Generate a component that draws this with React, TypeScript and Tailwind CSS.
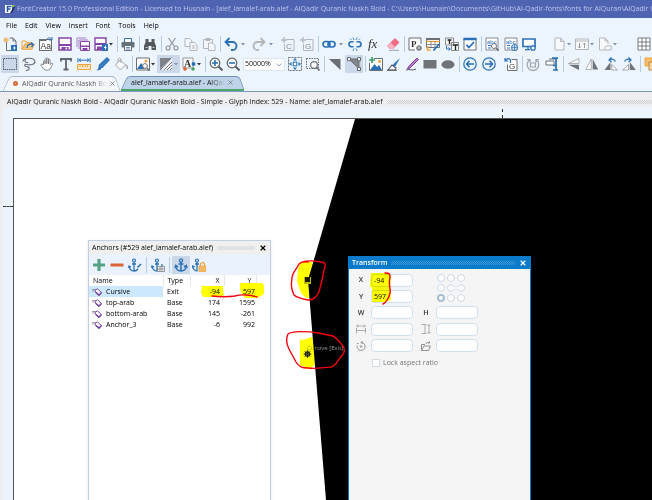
import React from 'react';
import clsx from 'clsx';
import { X } from 'lucide-react';

const GRAY = '#6b6e72';
const BLUE = '#2a70b8';
const LIGHT = '#b3b6ba';
const PURPLE = '#8545a8';
const ORANGE = '#eda23c';

const icons: Record<string, React.ReactNode> = {
  new: (
    <>
      <path d="M3.500 5V13.500H9M6.500 1h3.500l3 3V8M10 1v3h3" fill="none" stroke={GRAY} />
      <path d="M3 0v6M0 3h6M1 1l4 4M5 1L1 5" stroke={ORANGE} strokeWidth=".8" />
      <rect x="8" y="8" width="6" height="6" fill={BLUE} />
      <path d="M11.500 9.500v3M10 11h2.500" stroke="#fff" />
    </>
  ),
  open: (
    <>
      <path d="M1 12V4h4l1 1.500h4V7H4z" fill="none" stroke={ORANGE} />
      <path d="M1 12.500L4 7h9.500L11 12.500z" fill="#f5c77e" stroke={ORANGE} strokeWidth=".7" />
      <path d="M6 11c0-3.500 3-4.500 6-3.500M10 5.500l2.500 2-2 2.500" fill="none" stroke={BLUE} strokeWidth="1.300" />
    </>
  ),
  fontInfo: (
    <>
      <rect x=".5" y="2.500" width="12" height="11" fill="#fff" stroke={GRAY} />
      <path d="M.5 3h7" stroke={GRAY} strokeWidth="2" />
      <text x="1.500" y="11.500" fontSize="8.500" fill="#333" fontFamily="Liberation Sans, sans-serif">Aa</text>
      <path d="M8 2c2-2 3.500-1 4.500 0M13 0v3h-3" fill="none" stroke={BLUE} />
    </>
  ),
  save: (
    <>
      <path d="M1 1h12v12H1z" fill="#fff" stroke={PURPLE} strokeWidth="1.500" />
      <path d="M1 7h12v2H1zM3.500 10h7V13h-7z" fill={PURPLE} />
      <path d="M7.500 10.500h1.500v2H7.500z" fill="#fff" />
    </>
  ),
  saveAll: (
    <>
      <path d="M1 10V1h9M3 12V3h9" fill="none" stroke="#a77cc2" />
      <path d="M4.500 4.500h9v9h-9z" fill="#fff" stroke={PURPLE} />
      <path d="M4.500 8.500h9v1.500h-9zM6.500 11h5V13.500h-5z" fill={PURPLE} />
    </>
  ),
  saveAs: (
    <>
      <path d="M1 1h11v12H1z" fill="#fff" stroke={PURPLE} strokeWidth="1.400" />
      <path d="M1 6h11v2H1zM3 9.500h5V13H3z" fill={PURPLE} />
      <rect x="8" y="7" width="6" height="7" fill={BLUE} />
      <path d="M11.500 8.500v4M10 10.500h2.500" stroke="#fff" />
    </>
  ),
  print: (
    <>
      <path d="M3.500 5V1.500h7V5" fill="#fff" stroke={BLUE} />
      <rect x=".5" y="5" width="13" height="5.500" rx="1" fill="#66717e" />
      <path d="M3.500 8.500h7v5h-7z" fill="#fff" stroke={GRAY} />
      <path d="M5 10.500h4M5 12h4" stroke={BLUE} strokeWidth=".8" />
    </>
  ),
  binoculars: (
    <>
      <path d="M2.500 2h3v3h3V2h3v3l1.500 4v4h-4.500v-4h-3v4H1V9l1.500-4z" fill="#53565a" />
      <path d="M2.500 10.500h2M9.500 10.500h2" stroke="#c9ccd0" />
    </>
  ),
  cut: (
    <g fill="none" stroke="#8e9297" strokeWidth="1.100">
      <path d="M3.500 1l6 8.500M10.500 1l-6 8.500" />
      <circle cx="3" cy="11" r="2" />
      <circle cx="11" cy="11" r="2" />
    </g>
  ),
  copy: (
    <g fill="#f3f6fa" stroke={LIGHT}>
      <path d="M1 1.500h4.500L8 4v5.500H1z" />
      <path d="M6 5.500h4.500L13 8v5.500H6zM8 9h3M8 11h3" />
    </g>
  ),
  paste: (
    <g fill="#f3f6fa" stroke={LIGHT}>
      <path d="M1.500 2.500h9v9h-9zM4 1.500h4v2H4z" />
      <path d="M6.500 6h4L13 8.500v5H6.500z" />
    </g>
  ),
  undo: <path d="M5.500 1L1.500 5l4 4M2 5h6.500a4 4 0 010 8H7" fill="none" stroke={BLUE} strokeWidth="1.800" />,
  redo: <path d="M8.500 1l4 4-4 4M12 5H5.500a4 4 0 000 8H7" fill="none" stroke={LIGHT} strokeWidth="1.800" />,
  copyC: (
    <>
      <path d="M6 2.500h7v11H3.500V7" fill="none" stroke={LIGHT} />
      <path d="M3 0v6M0 3h6" stroke={LIGHT} strokeWidth="1.300" />
      <text x="5" y="11.500" fontSize="8" fill="#888" fontFamily="Liberation Sans, sans-serif">C</text>
    </>
  ),
  copyG: (
    <>
      <path d="M6 2.500h7v11H3.500V7" fill="none" stroke={LIGHT} />
      <path d="M3 0v6M0 3h6" stroke={LIGHT} strokeWidth="1.300" />
      <text x="5" y="11.500" fontSize="8" fill="#888" fontFamily="Liberation Sans, sans-serif">G</text>
    </>
  ),
  link: (
    <g fill="none" stroke={BLUE} strokeWidth="1.700">
      <rect x="1" y="4.500" width="7" height="5.500" rx="2.700" />
      <rect x="6" y="4.500" width="7" height="5.500" rx="2.700" />
    </g>
  ),
  unlink: (
    <g fill="none" stroke={BLUE} strokeWidth="1.600">
      <path d="M5.500 4.700H3.500a2.500 2.500 0 000 5h2M8.500 4.700h2a2.500 2.500 0 010 5h-2" />
      <path d="M5 .5l1 2.500M9 .5L8 3M5 14l1-2.500M9 14l-1-2.500M2 1.500l1.500 1.500M12 1.500L10.500 3" strokeWidth=".8" />
    </g>
  ),
  fx: <text x="1" y="11" fontSize="13" fontStyle="italic" fill="#333" fontFamily="Liberation Serif, serif">fx</text>,
  eraser: (
    <>
      <path d="M9 1l4.500 4.500L7 12H4L1 9z" fill="#ee6f86" />
      <path d="M4.500 5.500L9 10l-2 2H4L1 9z" fill="#f6b3bf" />
      <path d="M3 13.300h10" stroke="#9aa0a8" />
    </>
  ),
  preview: (
    <>
      <path d="M13 7V1H1v12h6" fill="#fff" stroke={GRAY} />
      <text x="3" y="10" fontSize="9" fill="#333" fontFamily="Liberation Serif, serif" fontWeight="bold">P</text>
      <circle cx="11" cy="11" r="2" fill="#fff" stroke={GRAY} strokeWidth="1.200" />
      <path d="M11 7.800v6.200M7.800 11H14" stroke={GRAY} strokeWidth=".6" />
    </>
  ),
  tableEdit: (
    <>
      <path d="M.5 1.500h13v9H.5z" fill="#fff" stroke={GRAY} />
      <path d="M.5 2h13" stroke={GRAY} strokeWidth="2" />
      <path d="M.5 4.500h13" stroke={ORANGE} strokeWidth="1.300" />
      <path d="M0 7.500h14M5 4v7M9 4v7" stroke={GRAY} strokeWidth=".7" />
      <path d="M1.500 9v4h3" fill="none" stroke={ORANGE} strokeWidth="1.500" />
      <path d="M7.500 13.500L13 7" stroke={BLUE} strokeWidth="1.800" />
    </>
  ),
  transformT: (
    <>
      <path d="M.5 1h8v7h-8zM6.500 5.500h7v8h-7z" fill="#fff" stroke={GRAY} strokeWidth=".8" />
      <path d="M2.500 3h4M4.500 3v4M8 8h5M10.500 8v5" stroke="#222" strokeWidth="1.400" />
      <path d="M1.500 9v3H5M3.500 10.500L5.300 12l-1.800 1.500" fill="none" stroke={BLUE} />
    </>
  ),
  validate: (
    <>
      <path d="M1 1.500h12v11.500H1z" fill="#fff" stroke={GRAY} />
      <path d="M.5 2h13" stroke={BLUE} strokeWidth="2.500" />
      <path d="M3.500 8l2.500 2.500 5-5.500" fill="none" stroke={BLUE} strokeWidth="1.800" />
    </>
  ),
  abcSearch: (
    <>
      <path d="M1 1h12v12H1z" fill="#fff" stroke={GRAY} strokeWidth=".8" />
      <text x="2" y="6.500" fontSize="6" fill={BLUE} fontFamily="Liberation Sans, sans-serif">abc</text>
      <path d="M3 8.500h3M3 11h3" stroke={BLUE} />
      <circle cx="9" cy="9" r="2.500" fill="#fff" stroke={GRAY} />
      <path d="M11 11l3 3" stroke={GRAY} strokeWidth="1.500" />
    </>
  ),
  abcWeb: (
    <>
      <path d="M1 1h12v12H1z" fill="#fff" stroke={GRAY} strokeWidth=".8" />
      <text x="2" y="6.500" fontSize="6" fill={BLUE} fontFamily="Liberation Sans, sans-serif">abc</text>
      <path d="M3 8.500h3M3 11h3" stroke={BLUE} />
      <circle cx="10.500" cy="10.500" r="3" fill="#dcebfa" stroke={BLUE} />
      <path d="M7.500 10.500h6M10.500 7.500v6" stroke={BLUE} strokeWidth=".7" />
    </>
  ),
  monitor: (
    <>
      <path d="M1 2h12v7.500H1z" fill="#fff" stroke={BLUE} strokeWidth="1.700" />
      <path d="M6 10v2.500M3 12.700h5" stroke={BLUE} strokeWidth="1.200" />
      <circle cx="11" cy="11" r="2.200" fill="#fff" stroke={BLUE} strokeWidth="1.300" />
    </>
  ),
  page: <path d="M3 1h5.500L12 4.500V13H3zM8.500 1v3.500H12" fill="#f7f9fb" stroke={LIGHT} />,
  sort: (
    <>
      <path d="M.5 2h13v10.500H.5zM.5 4h13" fill="#f7f9fb" stroke={LIGHT} />
      <path d="M4.500 6v5M3 9.500L4.500 11 6 9.500M9.500 11V6M8 7.500L9.500 6 11 7.500" fill="none" stroke="#8e9297" strokeWidth=".9" />
    </>
  ),
  pageTag: (
    <>
      <path d="M8 13H1.500V1H7l3 3v3M7 1v3h3" fill="#f7f9fb" stroke={LIGHT} />
      <path d="M8 9h5l.5 2-.5 2H8l-1.500-2z" fill="#f7f9fb" stroke={LIGHT} />
    </>
  ),
  grid: <path d="M1 1h12v12H1zM1 5h12M1 9h12M5 1v12M9 1v12" fill="#fff" stroke="#777a7e" />,
  marquee: <rect x=".5" y="1.500" width="13" height="11" fill="none" stroke="#555b63" strokeDasharray="1.500 .8" />,
  lasso: (
    <path d="M1 4.500c0-4 12-4.500 12 0 0 3-5 4-8 3-2.500-1-3 1.500-1 2 2 .7 4 .5 3 2.500-.5 1-2 1.500-3 1.500M4 2.500C2 3 3 6 6 5.500" fill="none" stroke={GRAY} strokeWidth="1.100" />
  ),
  hand: (
    <path d="M3.500 8V4.500c0-1.200 1.500-1.200 1.500 0V7 2.500c0-1.300 1.700-1.300 1.700 0V6.500 1.800c0-1.200 1.700-1.200 1.700 0V7 3c0-1.200 1.600-1.200 1.600 0v4.500l1.500-1.200c.8-.4 1.500.3 1 1L10 12c-1 1.500-5 1.700-6.300 0L1 8.300c-.4-1 .7-1.500 1.300-1z" fill="#fff" stroke={GRAY} strokeWidth=".8" />
  ),
  type: <path d="M2 4.500V2h10v2.500M7 2v10.500M4.500 12.500h5" fill="none" stroke="#62656a" strokeWidth="1.800" />,
  ruler: (
    <>
      <path d="M.5 7.500h13v5H.5z" fill="#fde8c6" stroke={ORANGE} />
      <path d="M3 8v2M5.500 8v2M8 8v2M10.500 8v2" stroke={ORANGE} />
      <path d="M1 1v4.500M13 1v4.500M2 3.200h10M4 1.700L2 3.200l2 1.500M10 1.700l2 1.500-2 1.500" fill="none" stroke={BLUE} />
    </>
  ),
  pen: (
    <>
      <path d="M11 1l2 2-7 7.500-3 .5.500-3z" fill="#3f83c6" stroke={BLUE} strokeWidth="1.300" />
      <path d="M4 10c-1 0-1.500 2.500-3.500 3 2.500.6 5 0 4.500-2" fill={BLUE} />
    </>
  ),
  bucket: (
    <>
      <path d="M6 3l5.500 5-5 5L1.500 8zM4 5V2.500C4 .8 7 .8 7 2.500V6" fill="#fafbfc" stroke="#a2a5a9" />
      <path d="M11.500 8c2 0 1.800 3 1.800 4" fill="none" stroke="#a2a5a9" strokeWidth="1.400" />
    </>
  ),
  imageZoom: (
    <>
      <path d="M.5 1h13v12H.5z" fill="#fff" stroke={GRAY} />
      <path d="M1 12l4-6 4 6z" fill={BLUE} />
      <circle cx="10" cy="4" r="1.500" fill={ORANGE} />
      <circle cx="9" cy="9" r="2.400" fill="#fff" stroke={GRAY} />
      <path d="M11 11l2.500 3" stroke={GRAY} strokeWidth="1.500" />
    </>
  ),
  halfFill: (
    <>
      <path d="M1 1h11L1 12z" fill="#7e838a" />
      <path d="M13 1v12H3z" fill="#f2f4f7" />
      <path d="M12.500 .5L1 13M5 13l8-8M8 13l5-5M11 13l2-2" stroke="#62656a" strokeWidth=".9" />
    </>
  ),
  nodeA: (
    <>
      <path d="M1 1h10v10H1z" fill="#fff" stroke={GRAY} strokeWidth=".7" />
      <text x="2" y="10" fontSize="10" fontWeight="bold" fill="#333" fontFamily="Liberation Serif, serif">A</text>
      <circle cx="11.500" cy="7" r="2" fill={BLUE} />
      <circle cx="3" cy="12" r="1.800" fill="#e2622e" />
      <circle cx="11" cy="12" r="1.800" fill="#4aa564" />
    </>
  ),
  zoomIn: (
    <>
      <circle cx="6" cy="6" r="4.800" fill="#fff" stroke="#5c6066" strokeWidth="1.200" />
      <path d="M9.500 9.500l4 4" stroke="#5c6066" strokeWidth="2" />
      <path d="M3 6h6M6 3v6" stroke={BLUE} strokeWidth="1.600" />
    </>
  ),
  zoomOut: (
    <>
      <circle cx="6" cy="6" r="4.800" fill="#fff" stroke="#5c6066" strokeWidth="1.200" />
      <path d="M9.500 9.500l4 4" stroke="#5c6066" strokeWidth="2" />
      <path d="M3 6h6" stroke={BLUE} strokeWidth="1.600" />
    </>
  ),
  fit: (
    <>
      <rect x=".5" y=".5" width="13" height="13" fill="none" stroke={GRAY} strokeDasharray="2 1" />
      <rect x="5.200" y="5.200" width="3.600" height="3.600" fill="#fff" stroke={BLUE} />
      <path d="M7 1l2 2.500H5zM7 13l2-2.500H5zM1 7l2.500-2v4zM13 7l-2.500-2v4z" fill={BLUE} />
    </>
  ),
  zoomArea: (
    <>
      <rect x=".5" y="1.500" width="12" height="10" fill="none" stroke={GRAY} strokeDasharray="1.500 1" />
      <circle cx="8" cy="8" r="3.300" fill="#fff" stroke={GRAY} strokeWidth="1.200" />
      <path d="M10.500 10.500l3 3" stroke={GRAY} strokeWidth="1.700" />
    </>
  ),
  corner: <path d="M1 2h11.500v11z" fill="#6b6e72" />,
  cornerNodes: (
    <>
      <path d="M2 2h10v10z" fill="#83878d" stroke={GRAY} />
      <path d="M.5 .7h3v3h-3zM10.500 .7h3v3h-3zM10.500 10.500h3v3h-3z" fill="#fff" stroke="#62656a" />
    </>
  ),
  imageAdd: (
    <>
      <path d="M5 1.500h8.500v12H.5V6" fill="#fff" stroke={GRAY} />
      <path d="M1 13l4.500-6L8 10l2-2 3 5z" fill={BLUE} />
      <circle cx="10.500" cy="4.500" r="1.500" fill={ORANGE} />
      <path d="M3 0v6M0 3h6" stroke="#3c9e68" strokeWidth="1.700" />
    </>
  ),
  brush: (
    <>
      <path d="M13 1L6.500 7l-1 3 3-1z" fill={BLUE} />
      <path d="M1 13l4-5 4 3-1 2z" fill="#fff" stroke="#55595e" strokeWidth="1.200" />
      <path d="M0 13.200h10" stroke="#55595e" />
    </>
  ),
  pencil: (
    <>
      <path d="M12 1l1.500 1.500L5 11l-2.500 1L3.500 9.500z" fill="#b07acb" stroke={PURPLE} />
      <path d="M1 13.200c3-2 5 1 10-1" fill="none" stroke="#55595e" />
    </>
  ),
  rect: <path d="M.5 3h13v8.500H.5z" fill="#707377" />,
  ellipse: <ellipse cx="7" cy="7.500" rx="6.500" ry="4.300" fill="#707377" />,
  prev: (
    <g fill="none" stroke={BLUE} strokeWidth="1.200">
      <circle cx="7" cy="7" r="6.200" />
      <path d="M11 7H3.500M6.500 3.800L3.500 7l3 3.200" strokeWidth="1.500" />
    </g>
  ),
  next: (
    <g fill="none" stroke={BLUE} strokeWidth="1.200">
      <circle cx="7" cy="7" r="6.200" />
      <path d="M3 7h7.500M7.500 3.800l3 3.200-3 3.200" strokeWidth="1.500" />
    </g>
  ),
  glyphG: (
    <>
      <path d="M7.500 2.500H13v11H3.500V7.500" fill="#fff" stroke={GRAY} />
      <text x="5" y="11.500" fontSize="8" fill="#444" fontFamily="Liberation Sans, sans-serif">G</text>
      <path d="M1 1v3h3M1.500 4c1-3 4-3 5-1M6.500 6V3" fill="none" stroke={BLUE} strokeWidth="1.200" />
    </>
  ),
  rotateRect: (
    <g fill="none" stroke="#a0a3a7" strokeWidth="1.200">
      <path d="M4.500 6h5v4h-5z" />
      <path d="M3.500 3a5.800 5.800 0 107 0M4 5.500V2.500H1M10 5.500V2.500h3" />
    </g>
  ),
  align: (
    <>
      <path d="M1 4h8v4H1zM4 2h6" fill="#fff" stroke={GRAY} />
      <path d="M7 1.200h6M11 1v12.500M8 8.500h3M8 13h5" fill="none" stroke={BLUE} strokeWidth="1.700" />
    </>
  ),
  flipV: (
    <>
      <path d="M12 1.500V6.500H1.500z" fill="#fff" stroke="#8e9297" strokeWidth=".7" />
      <path d="M12 13V7.800H1.500z" fill="#707377" />
    </>
  ),
  flipH: (
    <>
      <path d="M6.300 2v10.500H.8z" fill="#fff" stroke="#8e9297" strokeWidth=".7" />
      <path d="M7.700 2v10.500h5.500z" fill="#707377" />
    </>
  ),
  rotL: (
    <>
      <path d="M6.500 5v8H.5z" fill="#707377" />
      <path d="M7.800 7.500V13h5.500z" fill="#fff" stroke="#8e9297" strokeWidth=".8" />
      <path d="M5 3c3-1.500 5-1 6.500 1.500M7.500 .5L5 3l2.500 2" fill="none" stroke={BLUE} strokeWidth="1.200" />
    </>
  ),
  rotR: (
    <>
      <path d="M6.500 7.500V13H.7z" fill="#fff" stroke="#8e9297" strokeWidth=".8" />
      <path d="M7.800 5v8h6z" fill="#707377" />
      <path d="M9 3C6 1.500 4 2 2.500 4.500M6.500 .5L9 3 6.500 5" fill="none" stroke={BLUE} strokeWidth="1.200" />
    </>
  ),
  union: (
    <>
      <path d="M1 1h8v8H1z" fill="#f3bd6d" stroke={ORANGE} />
      <path d="M5 5h8v8H5z" fill="#f7d6a3" stroke="#b98440" />
    </>
  ),
};

const anchorPath = 'M7 4v9M4.500 6h5M1.500 8c.5 3 2.500 5 5.500 5s5-2 5.500-5M1 10l.7-2.500L4 9M13 10l-.7-2.500L10 9';

const anchorIcons: Record<string, React.ReactNode> = {
  'Add anchor': <path d="M7 1v12M1 7h12" stroke="#55a184" strokeWidth="3.200" />,
  'Remove anchor': <path d="M.5 7h13" stroke="#dd6436" strokeWidth="3" />,
  'Edit anchor': (
    <>
      <path d="M6 4v9M4 6h4M1 8c.5 3 2 5 5 5 2 0 3-.7 4-2M.7 10L1 8l2 1" fill="none" stroke={BLUE} strokeWidth="1.300" />
      <circle cx="6" cy="2.500" r="1.500" fill="none" stroke={BLUE} strokeWidth="1.200" />
      <path d="M9.500 9.500L13 6" stroke={BLUE} strokeWidth="1.600" />
    </>
  ),
  'Anchor table': (
    <>
      <path d="M6 4v9M4 6h4M1 8c.5 3 2 5 5 5M.7 10L1 8l2 1M11 9V6" fill="none" stroke={BLUE} strokeWidth="1.300" />
      <circle cx="6" cy="2.500" r="1.500" fill="none" stroke={BLUE} strokeWidth="1.200" />
      <path d="M6.500 8.500h7v5h-7zM6.500 11h7M9 9v4M11 9v4" fill="#fff" stroke={GRAY} strokeWidth=".7" />
    </>
  ),
  'Show anchors': (
    <>
      <path d={anchorPath} fill="none" stroke={BLUE} strokeWidth="1.500" />
      <circle cx="7" cy="2.500" r="1.600" fill="none" stroke={BLUE} strokeWidth="1.300" />
    </>
  ),
  'Lock anchors': (
    <>
      <path d="M5 4v9M3 6h4M.5 8c.5 3 2 5 5 5M.5 10l.3-2 2 1" fill="none" stroke={BLUE} strokeWidth="1.300" />
      <circle cx="5" cy="2.500" r="1.500" fill="none" stroke={BLUE} strokeWidth="1.200" />
      <path d="M8.500 8V6.500c0-2.500 4-2.500 4 0V8" fill="none" stroke={ORANGE} strokeWidth="1.200" />
      <path d="M7 8h7v5.500H7z" fill="#f3b765" stroke={ORANGE} strokeWidth=".7" />
    </>
  ),
};

function Drawing({ children }: { children: React.ReactNode }) {
  return (
    <svg viewBox="0 0 14 14" className="size-3.5 shrink-0" aria-hidden="true">
      {children}
    </svg>
  );
}

interface ToolProps {
  name: string;
  menu?: boolean;
  wide?: boolean;
  active?: boolean;
  muted?: boolean;
}

function Tool({ name, menu, wide, active, muted }: ToolProps) {
  return (
    <button
      type="button"
      aria-label={name}
      className={clsx('flex h-[18px] shrink-0 items-center', wide ? 'gap-[3px]' : 'gap-px', active && '-mx-0.5 bg-[#cbd8e9] px-0.5')}
    >
      <Drawing>{icons[name]}</Drawing>
      {menu && (
        <svg viewBox="0 0 4 3" className={clsx('h-[3px] w-1', muted ? 'text-[#7f93ad]' : 'text-[#333]')} aria-hidden="true">
          <path d="M0 0h4L2 2.500z" fill="currentColor" />
        </svg>
      )}
    </button>
  );
}

function Group({ className, children }: { className: string; children: React.ReactNode }) {
  return <div className={clsx('flex shrink-0 items-center justify-between', className)}>{children}</div>;
}

const Sep = () => <div className="mr-[3px] ml-1 h-4 w-px shrink-0 bg-[#b4cbe6]" />;

const Hatch = ({ className }: { className: string }) => (
  <div className={clsx('h-1 flex-1 bg-[length:2px_2px]', className)} />
);

function Tab({ active, children, label }: { active?: boolean; children?: React.ReactNode; label: string }) {
  const face = active
    ? 'before:bg-[#bfd3e8] after:bg-[#bfd3e8] before:border-[#6f8fb5] after:border-[#6f8fb5]'
    : 'before:bg-[#f4f8fd] after:bg-[#f4f8fd] before:border-[#a6b8cf] after:border-[#a6b8cf]';
  return (
    <div
      role="tab"
      aria-selected={!!active}
      className={clsx(
        'relative isolate flex h-[15px] shrink-0 items-center gap-0.5 pl-[10px]',
        "before:absolute before:inset-y-0 before:left-[3px] before:-z-10 before:w-1/2 before:-skew-x-[25deg] before:rounded-tl-sm before:border-t before:border-l before:content-['']",
        "after:absolute after:inset-y-0 after:right-[3px] after:-z-10 after:w-1/2 after:skew-x-[20deg] after:rounded-tr-sm after:border-t after:border-r after:content-['']",
        face,
        active ? 'w-[123px] border-b-2 border-[#4ba56c] pr-[10px]' : 'w-[118px] pr-[5px] text-[#555]'
      )}
    >
      {children}
      <span className="min-w-0 flex-1 overflow-hidden mask-r-from-85% whitespace-nowrap">{label}</span>
      <button type="button" aria-label={`Close ${label}`}>
        <X size={7} strokeWidth={2} className="text-[#555]" />
      </button>
    </div>
  );
}

// Marker blot that sits behind a value
const Marker = ({ className, d }: { className: string; d: string }) => (
  <svg className={clsx('pointer-events-none absolute -z-10 overflow-visible', className)} fill="#ffff00" aria-hidden="true">
    <path d={d} />
  </svg>
);

const anchors = [
  { name: 'Cursive', type: 'Exit', x: -94, y: 597, marked: true },
  { name: 'top-arab', type: 'Base', x: 174, y: 1595 },
  { name: 'bottom-arab', type: 'Base', x: 145, y: -261 },
  { name: 'Anchor_3', type: 'Base', x: -6, y: 992 },
];

function AnchorsPanel() {
  return (
    <section className="absolute top-[133px] bottom-0 left-[85px] w-[183px] border-x border-t border-[#c3cde3] bg-white text-black shadow-sm">
      <header className="flex h-[13px] items-center gap-1 bg-[#f0f0f1] px-[3px]">
        <h2>Anchors (#529 alef_lamalef-arab.alef)</h2>
        <Hatch className="bg-[repeating-conic-gradient(#d4d4d8_0_25%,transparent_0_50%)]" />
        <button type="button" aria-label="Close anchors">
          <X size={8} strokeWidth={3.5} />
        </button>
      </header>
      <div className="flex h-[21px] items-center gap-1 bg-[#eaf3fd] px-[3px]">
        {Object.entries(anchorIcons).map(([label, icon]) => (
          <React.Fragment key={label}>
            <button
              type="button"
              aria-label={label}
              className={clsx('flex h-[18px] items-center', label === 'Show anchors' && '-mx-0.5 bg-[#cbd8e9] px-0.5')}
            >
              <Drawing>{icon}</Drawing>
            </button>
            {(label === 'Edit anchor' || label === 'Anchor table') && <span className="h-4 w-px bg-[#b4cbe6]" />}
          </React.Fragment>
        ))}
      </div>
      <table className="w-full table-fixed border-collapse">
        <colgroup>
          <col className="w-[74px]" />
          <col className="w-[27px]" />
          <col className="w-[34px]" />
          <col className="w-[32px]" />
          <col />
        </colgroup>
        <thead>
          <tr className="h-[11px] text-left">
            <th className="border-r border-[#e3e6ea] pl-1 font-normal">Name</th>
            <th className="border-r border-[#e3e6ea] pl-1 font-normal">Type</th>
            <th className="border-r border-[#e3e6ea] pr-1 text-right font-normal">X</th>
            <th className="border-r border-[#e3e6ea] pr-1 text-right font-normal">Y</th>
            <th />
          </tr>
        </thead>
        <tbody>
          {anchors.map((a) => (
            <tr key={a.name} className="h-[11px]">
              <td className={clsx('pl-[3px]', a.marked && 'bg-[#cce8ff]')}>
                <span className="flex items-center gap-1">
                  <svg viewBox="0 0 10 8" className="h-2 w-2.5" aria-hidden="true">
                    <path d="M0 1.500h3M0 3h2" stroke="#888" strokeWidth=".8" />
                    <path d="M3 2l2.500-1 4 3.500L7 7.500 3.500 4.500z" fill="#fff" stroke="#7543a0" />
                    <path d="M4 4.500L7 7l2.500-2.500" fill="none" stroke="#7543a0" strokeWidth="1.400" />
                  </svg>
                  {a.name}
                </span>
              </td>
              <td className="pl-1">{a.type}</td>
              <td className="relative isolate pr-1 text-right">
                {a.marked && <Marker className="top-0 right-0 h-3 w-6" d="M2 0h21v3l1 6-2 2H3l-2-5z" />}
                {a.x}
              </td>
              <td className="relative isolate pr-px text-right">
                {a.marked && <Marker className="-top-1 -right-2 h-4 w-6" d="M0 1h22l2 2v9l-3 2-4 2H5l-3-4-2-4z" />}
                {a.y}
              </td>
              <td />
            </tr>
          ))}
        </tbody>
      </table>
    </section>
  );
}

const fieldClass = 'h-[13px] w-[42px] rounded-sm border border-[#cfe0f1] bg-white px-0.5 text-black';

function Field({ label, children, value = '' }: { label: string; children?: React.ReactNode; value?: string }) {
  return (
    <label className="flex items-center">
      <span className="flex w-[22px] justify-center pl-1 pr-0.5 font-semibold">{children ?? label}</span>
      <input aria-label={label} defaultValue={value} className={fieldClass} />
    </label>
  );
}

function TransformPanel() {
  return (
    <section className="absolute top-[149px] bottom-0 left-[345px] w-[183px] border-x border-[#0a78c6] bg-[#f5f5f5]">
      <header className="flex h-[13px] items-center gap-1 bg-[#0a7acb] px-[3px] text-white">
        <h2 className="font-semibold">Transform</h2>
        <Hatch className="bg-[repeating-conic-gradient(#3c96d8_0_25%,transparent_0_50%)]" />
        <button type="button" aria-label="Close transform">
          <X size={8} strokeWidth={3.5} />
        </button>
      </header>
      <div className="mt-[3px] grid h-[82px] grid-cols-[65px_65px] grid-rows-5 items-center text-[#333]">
        <Field label="X" value="-94" />
        <div className="row-span-2 grid w-fit grid-cols-3 gap-0.5 justify-self-end pr-3.5">
          {Array.from({ length: 9 }, (_, i) => (
            <input
              key={i}
              type="radio"
              name="origin"
              aria-label={`Origin ${i + 1}`}
              defaultChecked={i === 6}
              className="size-2 appearance-none rounded-full border border-[#cbd9e9] bg-white checked:border-2 checked:border-[#a9bdd6]"
            />
          ))}
        </div>
        <Field label="Y" value="597" />
        <Field label="W" />
        <Field label="H" />
        <Field label="Width">
          <svg viewBox="0 0 10 10" className="size-2.5" fill="none" stroke="#999ca0" strokeWidth=".8">
            <path d="M.5 4v5.500M9.500 4v5.500M.5 6.500h9M.5 2h9M2 .5L.5 2 2 3.500M8 .5L9.500 2 8 3.500" />
          </svg>
        </Field>
        <Field label="Height">
          <svg viewBox="0 0 10 10" className="size-2.5" fill="none" stroke="#999ca0" strokeWidth=".8">
            <path d="M.5 .5H5.500M.5 9.500H5.500M4 .5v9M8 .5v9M6.500 2L8 .5 9.500 2M6.500 8L8 9.500 9.500 8" />
          </svg>
        </Field>
        <Field label="Rotation">
          <svg viewBox="0 0 10 10" className="size-2.5" fill="none" stroke="#85888c" strokeWidth=".9">
            <path d="M5 1.500a4 4 0 11-3.800 3M6.500 0L5 1.500 6.500 3M1 2.500h1.500" />
            <circle cx="5" cy="5.500" r=".8" />
          </svg>
        </Field>
        <Field label="Skew">
          <svg viewBox="0 0 10 10" className="size-2.5" fill="none" stroke="#85888c" strokeWidth=".9">
            <path d="M.5 9.500V3.500H4M.5 9.500L3 5h6.500L7.500 9.500zM5 3c.5-2 2-2 3.500-1M8.500 .5V2H7" />
          </svg>
        </Field>
      </div>
      <label className="mt-1 ml-[23px] flex items-center gap-[3px] text-[#777]">
        <input type="checkbox" className="size-2 appearance-none border border-[#cfdae6] bg-white" />
        Lock aspect ratio
      </label>
    </section>
  );
}

// Marker strokes drawn over the workspace
function Markup() {
  return (
    <>
      <svg className="pointer-events-none absolute inset-0 size-full mix-blend-multiply" fill="#ffff00" aria-hidden="true">
        <path d="M371 273h18l2 3-1 12 1 12-6 2h-13v-14l-2-2z" />
        <path d="M301 262h11l2 7-2 12v17h-6l-5-5-4-12 1-12zM300 340l6-1 6-2 4 2v25l-5 4-5 1-2-3h-4z" />
      </svg>
      <svg className="pointer-events-none absolute inset-0 size-full" fill="none" stroke="#f3000c" strokeWidth="1.400" strokeLinecap="round" aria-hidden="true">
        <path d="M304 277h7v7h-7z" fill="#b9b900" stroke="none" />
        <path d="M305 277h5v5h-5z" fill="#1c1c08" stroke="none" />
        <circle cx="307.500" cy="354" r="2.200" stroke="#222" strokeWidth="1.200" />
        <path d="M304 354h7M307.500 350.500v7M305 351.500l5 5M310 351.500l-5 5" stroke="#222" strokeWidth=".9" />
        <path d="M303 262c6-2 13-1 18 0 5 0 5 3 3 8l-2 10-3 12c-3 5-5 8-11 8-5-1-12-3-14-5-3-7-3-9-2-17 0-5 4-8 7-14 3-3 6-3 9-2" />
        <path d="M288 334c4-3 18-3 30-1l15 3c4 2 7 7 10 10 3 4 1 8-3 12-3 3-4 8-9 9-8 1-15 2-23 1-6 0-9-1-12-6l-7-13c-3-6-3-11-1-15z" />
        <path d="M212 296c8 1 16 1 23 0 6-2 16-1 22 1" />
        <path d="M385 273c5 0 5 1 5 5-2 5 1 11 0 15-1 5-4 10-7 11" />
      </svg>
    </>
  );
}

export default function App() {
  return (
    <div
      className="relative flex min-h-screen flex-col overflow-hidden bg-[#ecf4fd] text-[7px] leading-[10px] text-[#111]"
      style={{ fontFamily: '"Open Sans", "Noto Sans", sans-serif' }}
    >
      <div className="flex h-[18px] items-center gap-0.5 bg-[#4f63b3] pl-[5px] whitespace-nowrap text-[#bdc6ec]">
        <svg viewBox="0 0 10 10" className="size-2.5 shrink-0" aria-hidden="true">
          <path d="M0 1h7v8H0z" fill="#fff" />
          <path d="M2.500 8V2.500h4M2.500 5h3" fill="none" stroke="#1d56a5" strokeWidth="1.500" />
          <path d="M5 9l4-7 1 1-3 6z" fill="#1e2c59" />
          <path d="M7 1h2.500v2H7z" fill="#8fbf4a" />
        </svg>
        <h1>
          FontCreator 15.0 Professional Edition - Licensed to Husnain - [alef_lamalef-arab.alef - AlQadir Quranic Naskh Bold -
          C:\Users\Husnain\Documents\GitHub\Al-Qadir-fonts\fonts for AlQuran\AlQadir Quranic Naskh Bold]
        </h1>
      </div>

      <nav className="flex h-4 items-center gap-2 pl-1.5 text-black">
        {['File', 'Edit', 'View', 'Insert', 'Font', 'Tools', 'Help'].map((item) => (
          <button key={item} type="button">{item}</button>
        ))}
      </nav>

      <div className="flex h-5 items-center overflow-hidden pl-[3px]">
        <Group className="w-[110px]">
          <Tool name="new" />
          <Tool name="open" />
          <Tool name="fontInfo" />
          <Tool name="save" />
          <Tool name="saveAll" />
          <Tool name="saveAs" menu />
        </Group>
        <Sep />
        <Tool name="print" />
        <Sep />
        <Tool name="binoculars" />
        <Sep />
        <Group className="w-[51px]">
          <Tool name="cut" />
          <Tool name="copy" />
          <Tool name="paste" />
        </Group>
        <Sep />
        <Group className="w-[49px]">
          <Tool name="undo" menu wide muted />
          <Tool name="redo" menu wide muted />
        </Group>
        <Group className="ml-2 w-[33px]">
          <Tool name="copyC" />
          <Tool name="copyG" />
        </Group>
        <Sep />
        <Group className="w-[78px]">
          <Tool name="link" menu wide muted />
          <Tool name="unlink" />
          <Tool name="fx" />
          <Tool name="eraser" />
        </Group>
        <Sep />
        <Group className="w-[69px]">
          <Tool name="preview" />
          <Tool name="tableEdit" />
          <Tool name="transformT" />
          <Tool name="validate" />
        </Group>
        <Sep />
        <Group className="w-[51px]">
          <Tool name="abcSearch" />
          <Tool name="abcWeb" />
          <Tool name="monitor" />
        </Group>
        <Group className="ml-4 w-[65px]">
          <Tool name="page" menu muted />
          <Tool name="sort" menu muted />
          <Tool name="pageTag" menu muted />
        </Group>
        <Group className="ml-5 w-3.5">
          <Tool name="grid" />
        </Group>
      </div>

      <div className="flex h-5 items-center overflow-hidden pl-[3px]">
        <Group className="w-[125px]">
          <Tool name="marquee" active />
          <Tool name="lasso" />
          <Tool name="hand" />
          <Tool name="type" />
          <Tool name="ruler" />
          <Tool name="pen" />
          <Tool name="bucket" />
        </Group>
        <Sep />
        <Group className="w-[65px]">
          <Tool name="imageZoom" menu />
          <Tool name="halfFill" menu active muted />
          <Tool name="nodeA" menu />
        </Group>
        <Sep />
        <Group className="w-[31px]">
          <Tool name="zoomIn" />
          <Tool name="zoomOut" />
        </Group>
        <div className="relative mx-[3px] w-[42px] shrink-0">
          <select aria-label="Zoom" defaultValue="50000%" className="h-[13px] w-full appearance-none border border-[#dbe6f2] bg-white pl-px">
            <option>50000%</option>
            <option>100%</option>
          </select>
          <svg viewBox="0 0 6 4" className="pointer-events-none absolute top-[5px] right-[3px] h-1 w-1.5" aria-hidden="true">
            <path d="M.5 .5L3 3 5.500 .5" fill="none" stroke="#8fa5c0" />
          </svg>
        </div>
        <Group className="w-8">
          <Tool name="fit" />
          <Tool name="zoomArea" />
        </Group>
        <Sep />
        <Group className="w-[33px]">
          <Tool name="corner" />
          <Tool name="cornerNodes" active />
        </Group>
        <Sep />
        <Group className="w-[86px]">
          <Tool name="imageAdd" />
          <Tool name="brush" />
          <Tool name="pencil" />
          <Tool name="rect" />
          <Tool name="ellipse" />
        </Group>
        <Sep />
        <Group className="w-[33px]">
          <Tool name="prev" />
          <Tool name="next" />
        </Group>
        <Group className="ml-2 w-3.5">
          <Tool name="glyphG" />
        </Group>
        <Sep />
        <Group className="w-[33px]">
          <Tool name="rotateRect" />
          <Tool name="align" />
        </Group>
        <Sep />
        <Group className="w-[69px]">
          <Tool name="flipV" />
          <Tool name="flipH" />
          <Tool name="rotL" />
          <Tool name="rotR" />
        </Group>
        <Sep />
        <Tool name="union" />
      </div>

      <div role="tablist" className="flex h-[18px] items-end border-b border-[#7d9bc0] pl-[3px]">
        <Tab label="AlQadir Quranic Naskh Bold">
          <span className="mr-0.5 size-[5px] shrink-0 rounded-full border-2 border-[#dd6a35]" />
        </Tab>
        <Tab active label="alef_lamalef-arab.alef - AlQadi" />
      </div>

      <div className="flex h-[15px] items-center gap-1 bg-[#eeeef0] pt-1 pl-[7px] whitespace-nowrap">
        <p>AlQadir Quranic Naskh Bold - AlQadir Quranic Naskh Bold - Simple - Glyph Index: 529 - Name: alef_lamalef-arab.alef</p>
        <Hatch className="bg-[repeating-conic-gradient(#d0d0d4_0_25%,transparent_0_50%)]" />
      </div>

      <main className="flex flex-1 border-l-[3px] border-[#eeeef0]">
        <div className="relative flex flex-1 pt-[11px] pl-2.5">
          <div className="absolute top-[99px] left-0 w-2.5 border-t border-dashed border-[#333]" />
          <div className="absolute top-0.5 left-[499px] h-[9px] border-l border-dashed border-[#333]" />
          <div className="flex-1 overflow-hidden border-t border-l border-[#555] bg-white">
            <svg className="block size-full" aria-label="Glyph outline">
              <path d="M341 0L294 161 312 381 360 1400H3000V0z" fill="#000" />
            </svg>
          </div>
          <span className="absolute top-[236px] left-[304px] text-[6px] text-[#999]">Cursive [Exit]</span>
          <AnchorsPanel />
          <TransformPanel />
        </div>
      </main>

      <Markup />
    </div>
  );
}
